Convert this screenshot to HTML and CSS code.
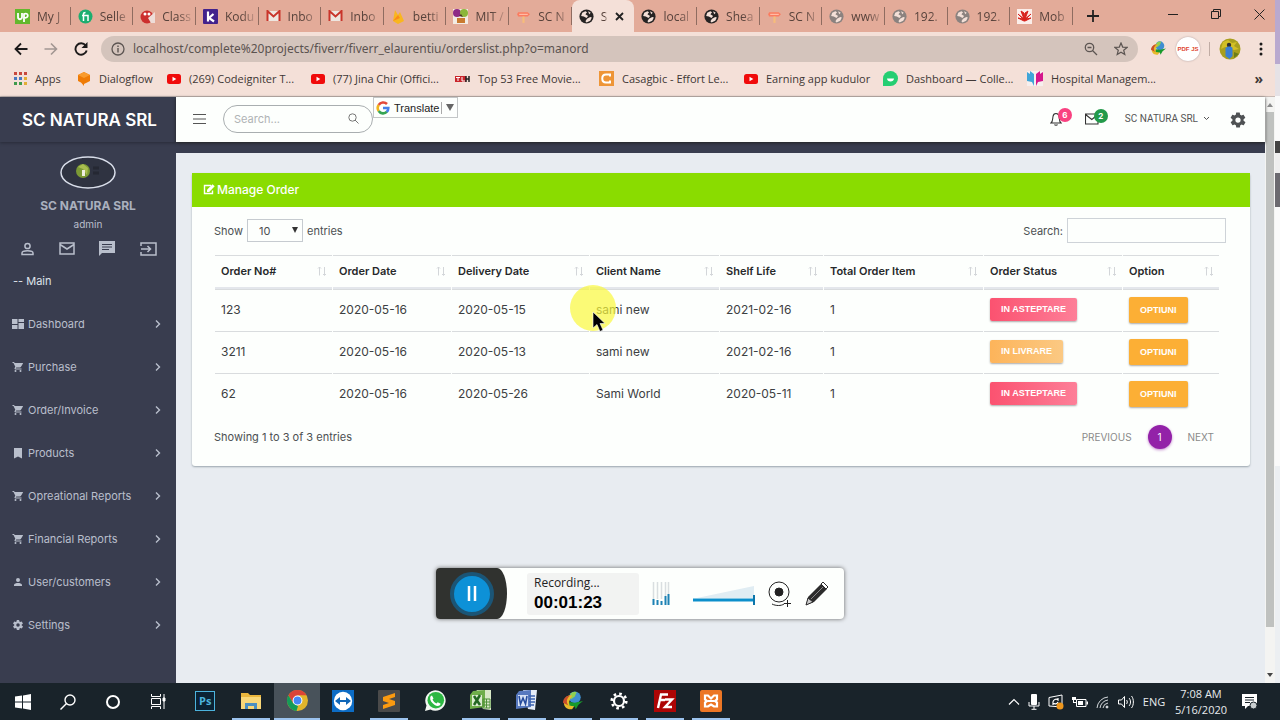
FILE: index.html
```html
<!DOCTYPE html>
<html lang="en">
<head>
  <meta charset="UTF-8" />
  <meta name="viewport" content="width=device-width, initial-scale=1.0"/>
  <title>Manage Order</title>
  <link rel="stylesheet" href="styles.css">
</head>
<body>

  <!-- Shared icons -->
  <svg class="defs" aria-hidden="true">
    <symbol id="i-globe" viewBox="0 0 14 14"><circle cx="7" cy="7" r="6.6" fill="currentColor"/><path d="M3 3.500l3-1.500 1.500 1L6 5l2.500 1.500L7 8.500 4.500 7 2 6.500zM7.500 9l3-1.500 1.500.5-1.500 3L7 12.500 6 11.500z" fill="#f4e0d8"/><path d="M8.500 2l2.500 1.500-1.500 1.300z" fill="#f4e0d8"/></symbol>
    <symbol id="i-gmail" viewBox="0 0 14 12"><path d="M1 1h12v10H1z" fill="#eee6e0"/><path d="M1 11V1l6 5.4L13 1v10" fill="none" stroke="#c9352b" stroke-width="2"/></symbol>
    <symbol id="i-sc" viewBox="0 0 14 14"><path d="M2 3h9l2 2-2 2H2L1 5z" fill="#fb7c60"/><path d="M6 7h2v6H6z" fill="#f7bd79"/><path d="M3 5h8" stroke="#ffc3b0"/></symbol>
    <symbol id="i-yt" viewBox="0 0 14 10"><rect width="14" height="10" rx="2.5" fill="#f00b0b"/><path d="M5.5 2.8v4.4L9.3 5z" fill="#fff"/></symbol>
    <symbol id="i-cart" viewBox="0 0 24 24"><path fill="currentColor" d="M7 18a2 2 0 100 4 2 2 0 000-4zM1 2v2h2l3.6 7.6-1.4 2.4C4.500 15.400 5.500 17 7 17h12v-2H7.400l1.100-2h7.500c.7 0 1.400-.4 1.700-1L21.900 5c.3-.7-.1-1-.9-1H5.200L4.300 2zM17 18a2 2 0 100 4 2 2 0 000-4z"/></symbol>
    <symbol id="i-person" viewBox="0 0 24 24"><path fill="currentColor" d="M12 12a4 4 0 100-8 4 4 0 000 8zm0 2c-3 0-8 1.300-8 4v2h16v-2c0-2.700-5-4-8-4z"/></symbol>
    <symbol id="i-gear" viewBox="0 0 24 24"><path fill="currentColor" d="M19.400 13a7.500 7.500 0 000-2l2.100-1.600c.2-.2.3-.4.1-.7l-2-3.400c-.1-.2-.4-.3-.6-.2l-2.500 1a7 7 0 00-1.700-1L14.400 2.400A.5.500 0 0014 2h-4c-.3 0-.5.200-.5.400l-.4 2.700a7 7 0 00-1.700 1l-2.500-1c-.2-.1-.5 0-.6.200l-2 3.400c-.1.200-.1.500.1.700L4.600 11a7.500 7.500 0 000 2l-2.100 1.600c-.2.200-.3.400-.1.700l2 3.400c.1.200.4.300.6.200l2.500-1c.5.400 1.100.7 1.700 1l.4 2.700c0 .2.200.4.500.4h4c.3 0 .5-.2.500-.4l.4-2.700a7 7 0 001.700-1l2.500 1c.2.100.5 0 .6-.2l2-3.400c.1-.2.100-.5-.1-.7zM12 15.500a3.500 3.500 0 110-7 3.500 3.500 0 010 7z"/></symbol>
    <symbol id="i-next" viewBox="0 0 8 10"><path d="M2 1.500L5.500 5 2 8.500" fill="none" stroke="currentColor" stroke-width="1.400"/></symbol>
    <symbol id="i-sort" viewBox="0 0 10 10"><path d="M2.500 9.500V1M1 2.500L2.500 1 4 2.500M7.500 1v8M6 8l1.500 1.500L9 8" fill="none" stroke="#d3d6d9" stroke-width="1"/></symbol>
    <symbol id="i-idm" viewBox="0 0 24 22"><circle cx="14" cy="7" r="6.500" fill="#3f8fd0"/><path d="M9 3a7 7 0 017-2l-2 5-4 3z" fill="#8ed052"/><path d="M2 13C2 7 7 4 11 5l-3 6c-1 4 3 6 6 5l-3 4C6 21 2 18 2 13z" fill="#e8bb2a"/><path d="M1 13c0-5 4-8 8-8-4 3-5 7-2 11z" fill="#c94e2c"/><path d="M8 12l6 1 9-2-5 4-3 5-1-3-6-1z" fill="#189a2c"/></symbol>
  </svg>

  <div class="work">
    <div class="browser">

      <!-- Tab strip -->
      <div class="tabstrip">
        <div class="tabs">
          <div class="tab"><svg width="15" height="15"><rect width="15" height="15" fill="#63b82c"/><path d="M3 4v4c0 3 4 3 4 0V4m2 9V5c4-2 6 4 0 4" fill="none" stroke="#fff" stroke-width="1.800"/></svg><span>My J</span></div>
          <div class="tab"><svg width="15" height="15"><circle cx="7.500" cy="7.500" r="7" fill="#1dae70"/><path d="M5.500 12V5c0-1.500 1-1.500 2-1.500M4 6.500h6V12" fill="none" stroke="#fff" stroke-width="1.500"/></svg><span>Selle</span></div>
          <div class="tab"><svg width="15" height="15"><circle cx="7" cy="8" r="6.500" fill="#cc2f2d"/><circle cx="5" cy="5" r="1.500" fill="#fff"/><path d="M8 9l7-6v11h-4z" fill="#eeddd8"/><circle cx="9" cy="5" r="1.500" fill="#fff"/></svg><span>Class</span></div>
          <div class="tab"><svg width="15" height="15"><rect width="15" height="15" rx="1" fill="#42228c"/><path d="M5 2.500v10M10.500 5L6 9l5 3.500" fill="none" stroke="#fff" stroke-width="2.200"/></svg><span>Kodu</span></div>
          <div class="tab"><svg width="15" height="12"><use href="#i-gmail"/></svg><span>Inbo</span></div>
          <div class="tab"><svg width="15" height="12"><use href="#i-gmail"/></svg><span>Inbo</span></div>
          <div class="tab"><svg width="15" height="15"><path d="M2 12L4 1l3 5 2-3 4 9-6 3z" fill="#f9b61f"/><path d="M2 12l5-6 2 3z" fill="#f98a1b"/></svg><span>betti</span></div>
          <div class="tab"><svg width="15" height="15"><rect width="15" height="15" fill="#f3ece4"/><circle cx="4" cy="4" r="4" fill="#8e2a86"/><circle cx="11" cy="4" r="4" fill="#8bb63a"/><path d="M4 9h8v5H4z" fill="#c97a30"/><path d="M6 7l2-2 2 3z" fill="#4a3320"/></svg><span>MIT /</span></div>
          <div class="tab"><svg width="15" height="15"><use href="#i-sc"/></svg><span>SC N</span></div>
          <div class="tab active"><svg width="15" height="15"><use href="#i-globe"/></svg><span>S</span><button class="tab-close" aria-label="Close tab"><svg width="9" height="9"><path d="M1 1l7 7M8 1L1 8" stroke="#222" stroke-width="1.800"/></svg></button></div>
          <div class="tab"><svg width="15" height="15"><use href="#i-globe"/></svg><span>local</span></div>
          <div class="tab"><svg width="15" height="15"><use href="#i-globe"/></svg><span>Shea</span></div>
          <div class="tab"><svg width="15" height="15"><use href="#i-sc"/></svg><span>SC N</span></div>
          <div class="tab idle"><svg width="15" height="15"><use href="#i-globe"/></svg><span>www</span></div>
          <div class="tab idle"><svg width="15" height="15"><use href="#i-globe"/></svg><span>192.</span></div>
          <div class="tab idle"><svg width="15" height="15"><use href="#i-globe"/></svg><span>192.</span></div>
          <div class="tab"><svg width="15" height="15"><rect width="15" height="15" fill="#fbeeea"/><path d="M7 12L1 9l5 1-5-5 6 5-3-8 3 2 .5 6L8 4l3-2-3 8 6-5-5 5 5-1-6 3z" fill="#d8221c" stroke="#d8221c"/></svg><span>Mob</span></div>
        </div>
        <button class="new-tab" aria-label="New tab"><svg width="12" height="12"><path d="M6 0v12M0 6h12" stroke="#222" stroke-width="1.800"/></svg></button>
        <div class="win-controls">
          <button aria-label="Minimize"><svg width="10" height="10"><path d="M0 5.500h10" stroke="#222"/></svg></button>
          <button aria-label="Restore"><svg width="10" height="10"><path d="M.5 2.500h7v7h-7zM2.500 2.500v-2h7v7h-2" fill="none" stroke="#222"/></svg></button>
          <button aria-label="Close"><svg width="11" height="11"><path d="M.5.500l10 10M10.500.500l-10 10" stroke="#222"/></svg></button>
        </div>
      </div>

      <!-- Address bar -->
      <div class="toolbar">
        <div class="nav-buttons">
          <button aria-label="Back"><svg width="14" height="14"><path d="M13.500 7H1.500M7 1.500L1.500 7 7 12.500" fill="none" stroke="#1c1a1a" stroke-width="1.800"/></svg></button>
          <button aria-label="Forward"><svg width="14" height="14"><path d="M.5 7h12M7 1.500L12.500 7 7 12.500" fill="none" stroke="#a19692" stroke-width="1.600"/></svg></button>
          <button aria-label="Reload"><svg width="14" height="14"><path d="M11.700 3.500A5.700 5.700 0 1012.700 8.500" fill="none" stroke="#1c1a1a" stroke-width="1.900"/><path d="M13.500 0v6h-6z" fill="#1c1a1a"/></svg></button>
        </div>
        <div class="address">
          <svg width="14" height="14"><circle cx="7" cy="7" r="6" fill="none" stroke="#5c5552" stroke-width="1.300"/><path d="M7 6v4.500M7 3.500V5" stroke="#5c5552" stroke-width="1.400"/></svg>
          <input type="text" aria-label="Address" value="localhost/complete%20projects/fiverr/fiverr_elaurentiu/orderslist.php?o=manord">
          <svg width="14" height="14"><circle cx="5.500" cy="5.500" r="4.200" fill="none" stroke="#5c5552" stroke-width="1.300"/><path d="M8.500 8.500l4.500 4.500M3.500 5.500h4" stroke="#5c5552" stroke-width="1.300"/></svg>
          <svg class="star" width="14" height="14"><path d="M7 1l1.700 4.100 4.400.3-3.400 2.800 1.100 4.300L7 10.200l-3.800 2.300 1.100-4.300L.9 5.400l4.400-.3z" fill="none" stroke="#5c5552" stroke-width="1.200"/></svg>
        </div>
        <div class="extensions">
          <svg width="17" height="15"><use href="#i-idm"/></svg>
          <span class="pdf">PDF JS</span>
          <span class="divider"></span>
          <svg width="22" height="22"><circle cx="11" cy="11" r="10.500" fill="#a99f1d"/><path d="M4 4l5-2 4 3 5-1-3 4 5 3-5 1-9-3-4 2z" fill="#d3bf24"/><circle cx="10" cy="7" r="2.200" fill="#33302c"/><path d="M6.500 10c2-2 6-2 7 0v8l-3 3-4-3z" fill="#3a7fd1"/><path d="M15 14l5 2-5 4z" fill="#6c7c18"/></svg>
          <svg class="kebab" width="4" height="14" fill="#1c1a1a"><circle cx="2" cy="2" r="1.500"/><circle cx="2" cy="7" r="1.500"/><circle cx="2" cy="12" r="1.500"/></svg>
        </div>
      </div>

      <!-- Bookmarks -->
      <div class="bookmarks">
        <a href="#" class="bm-apps"><svg width="13" height="13"><g stroke-width="3" stroke-dasharray="3 2"><path d="M0 1.500h13" stroke="#c8483c"/><path d="M0 6.500h13" stroke="#4878c0"/><path d="M0 11.500h13" stroke="#3f9a4c"/></g><path d="M10 5h3v8h-3z" fill="#e3ad35"/><path d="M10 8h3v2h-3z" fill="#f4e0d8"/></svg>Apps</a>
        <a href="#" class="bm-dialog"><svg width="14" height="14"><path d="M7 0l6 3v6l-6 3v2L4 10.500 1 9V3z" fill="#ef7b06"/><path d="M7 0l6 3-6 3-6-3z" fill="#f99b2d"/></svg>Dialogflow</a>
        <a href="#" class="bm-code"><svg width="14" height="10"><use href="#i-yt"/></svg>(269) Codeigniter T...</a>
        <a href="#" class="bm-jina"><svg width="14" height="10"><use href="#i-yt"/></svg>(77) Jina Chir (Offici...</a>
        <a href="#" class="bm-top"><svg width="15" height="6"><path d="M0 0h11v6H0z" fill="#c9252b"/><path d="M1 1.500h4M3 1.500V5M7 1v4h3" stroke="#fff" fill="none"/><path d="M11 0v6M14 0v6M11 3h3" stroke="#222" stroke-width="1.500"/></svg>Top 53 Free Movie...</a>
        <a href="#" class="bm-casa"><svg width="15" height="15"><rect width="15" height="15" fill="#ee9537"/><path d="M11 5.500V3.500H7c-5 0-5 8 0 8h4v-2" fill="none" stroke="#fff" stroke-width="2"/></svg>Casagbic - Effort Le...</a>
        <a href="#" class="bm-earn"><svg width="14" height="10"><use href="#i-yt"/></svg>Earning app kudulor</a>
        <a href="#" class="bm-dash"><svg width="15" height="15"><path d="M0 15V7.500A7.500 7.500 0 117.500 15z" fill="#25ce72"/><path d="M4 7.500h7c0 4-7 4-7 0z" fill="#fff"/></svg>Dashboard — Colle...</a>
        <a href="#" class="bm-hosp"><svg width="16" height="15"><rect width="16" height="15" fill="#f6efee"/><path d="M0 1l3 2V0l4 3v12L5 11l-5-1z" fill="#3fa5d8"/><path d="M16 1l-3 2V0L9 3v12l2-4 5-1z" fill="#d5168c"/></svg>Hospital Managem...</a>
        <button class="more" aria-label="More bookmarks">»</button>
      </div>

      <!-- Web page -->
      <div class="page">
        <aside class="sidebar">
          <a href="#" class="brand">SC NATURA SRL</a>
          <div class="profile">
            <svg class="avatar" width="56" height="33"><ellipse cx="28" cy="16.500" rx="27" ry="15.500" fill="#2f3341" stroke="#d9deea" stroke-width="1.500"/><circle cx="23" cy="15" r="7" fill="#7c9a35"/><path d="M18 11l5-3 5 4-1 7-4-6z" fill="#a9bd50"/><path d="M22 14h3v6h-3z" fill="#f0efe0"/><path d="M33 12h6M33 17h6" stroke="#252833" stroke-width="3"/></svg>
            <strong>SC NATURA SRL</strong>
            <small>admin</small>
            <div class="shortcuts">
              <a href="#" aria-label="Profile"><svg width="13" height="14"><circle cx="6.500" cy="4" r="2.600" fill="none" stroke="currentColor" stroke-width="1.500"/><path d="M1 12.500v-1.500c0-3 11-3 11 0v1.500z" fill="none" stroke="currentColor" stroke-width="1.500"/></svg></a>
              <a href="#" aria-label="Mail"><svg width="16" height="13"><path d="M1 1h14v11H1zM1 2.500l7 4.500 7-4.500" fill="none" stroke="currentColor" stroke-width="1.500"/></svg></a>
              <a href="#" aria-label="Messages"><svg width="16" height="15"><path d="M0 0h16v12H3l-3 3z" fill="currentColor"/><path d="M3 3.500h10M3 6h10M3 8.500h7" stroke="#393d4f"/></svg></a>
              <a href="#" aria-label="Log out"><svg width="17" height="14"><path d="M1 4V1h15v12H1v-3M1 7h9M7.500 4L10.500 7l-3 3" fill="none" stroke="currentColor" stroke-width="1.500"/></svg></a>
            </div>
          </div>
          <p class="menu-title">-- Main</p>
          <nav class="menu">
            <a href="#"><svg width="12" height="12"><path d="M0 1h5.500v5H0zM6.500 1H12v3H6.500zM6.500 5H12v6H6.500zM0 7h5.500v4H0z" fill="currentColor"/></svg><span>Dashboard</span><svg width="8" height="10"><use href="#i-next"/></svg></a>
            <a href="#"><svg width="12" height="12"><use href="#i-cart"/></svg><span>Purchase</span><svg width="8" height="10"><use href="#i-next"/></svg></a>
            <a href="#"><svg width="12" height="12"><use href="#i-cart"/></svg><span>Order/Invoice</span><svg width="8" height="10"><use href="#i-next"/></svg></a>
            <a href="#"><svg width="12" height="12"><path d="M2 1h8v10.500L6 9.500l-4 2z" fill="currentColor"/></svg><span>Products</span><svg width="8" height="10"><use href="#i-next"/></svg></a>
            <a href="#"><svg width="12" height="12"><use href="#i-cart"/></svg><span>Opreational Reports</span><svg width="8" height="10"><use href="#i-next"/></svg></a>
            <a href="#"><svg width="12" height="12"><use href="#i-cart"/></svg><span>Financial Reports</span><svg width="8" height="10"><use href="#i-next"/></svg></a>
            <a href="#"><svg width="12" height="12"><use href="#i-person"/></svg><span>User/customers</span><svg width="8" height="10"><use href="#i-next"/></svg></a>
            <a href="#"><svg width="12" height="12"><use href="#i-gear"/></svg><span>Settings</span><svg width="8" height="10"><use href="#i-next"/></svg></a>
          </nav>
        </aside>

        <div class="content">
          <header class="topbar">
            <button class="burger" aria-label="Toggle menu"><svg width="13" height="12"><path d="M0 1.500h13M0 6h13M0 10.500h13" stroke="#555"/></svg></button>
            <label class="site-search">
              <input type="text" placeholder="Search..." aria-label="Search site">
              <svg width="11" height="11"><circle cx="4.500" cy="4.500" r="3.700" fill="none" stroke="#777"/><path d="M7 7l3.500 3.500" stroke="#777"/></svg>
            </label>
            <button class="translate">
              <svg width="14" height="14" fill="none" stroke-width="2.600"><path d="M2.700 4A5.300 5.300 0 0111 3" stroke="#e24a3b"/><path d="M2.700 10a5.300 5.300 0 010-6" stroke="#f2b51d"/><path d="M11 10.700A5.300 5.300 0 012.700 10" stroke="#36a553"/><path d="M7 7h5.300c0 1.600-.5 2.800-1.500 3.900" stroke="#4580ea"/></svg>
              <span>Translate</span><svg width="8" height="7"><path d="M0 0h8L4 7z" fill="#666"/></svg>
            </button>
            <div class="top-actions">
              <a href="#" class="notify" aria-label="Notifications"><svg width="12" height="14"><path d="M1 11c2-1.500 1.500-4 2-6.500C3.500.5 8.500.5 9 4.500c.5 2.500 0 5 2 6.500zM4.500 12.500c.5 1 2.500 1 3 0" fill="none" stroke="#333" stroke-width="1.100"/></svg><b>6</b></a>
              <a href="#" class="notify mail" aria-label="Mail"><svg width="14" height="12"><path d="M.5 1h12.500v10H.5zM.5 1.500l6.300 5 6.200-5" fill="none" stroke="#333" stroke-width="1.100"/></svg><b>2</b></a>
              <a href="#" class="account">SC NATURA SRL <svg width="7" height="5"><path d="M1 1l2.500 2.500L6 1" fill="none" stroke="#555"/></svg></a>
              <a href="#" class="cog" aria-label="Settings"><svg width="18" height="18"><use href="#i-gear"/></svg></a>
            </div>
          </header>

          <main>
            <section class="card">
              <h2><svg width="12" height="11"><path d="M8 1.500H1.500v8h8V6.500" fill="none" stroke="#fff" stroke-width="1.400"/><path d="M4 8V5.800L9.500.2l2.200 2L6.200 8z" fill="#fff"/></svg>Manage Order</h2>
              <div class="card-body">
                <div class="controls">
                  <label class="length">Show
                    <span class="select"><select><option>10</option><option>25</option><option>50</option></select><svg width="6" height="6"><path d="M0 0h6L3 6z" fill="#333"/></svg></span>
                    entries</label>
                  <label class="filter">Search: <input type="search"></label>
                </div>

                <table>
                  <colgroup><col class="c-no"><col class="c-date"><col class="c-delivery"><col class="c-client"><col class="c-shelf"><col class="c-total"><col class="c-status"><col class="c-option"></colgroup>
                  <thead>
                    <tr>
                      <th><div>Order No#<svg width="10" height="10"><use href="#i-sort"/></svg></div></th>
                      <th><div>Order Date<svg width="10" height="10"><use href="#i-sort"/></svg></div></th>
                      <th><div>Delivery Date<svg width="10" height="10"><use href="#i-sort"/></svg></div></th>
                      <th><div>Client Name<svg width="10" height="10"><use href="#i-sort"/></svg></div></th>
                      <th><div>Shelf Life<svg width="10" height="10"><use href="#i-sort"/></svg></div></th>
                      <th><div>Total Order Item<svg width="10" height="10"><use href="#i-sort"/></svg></div></th>
                      <th><div>Order Status<svg width="10" height="10"><use href="#i-sort"/></svg></div></th>
                      <th><div>Option<svg width="10" height="10"><use href="#i-sort"/></svg></div></th>
                    </tr>
                  </thead>
                  <tbody>
                    <tr>
                      <td>123</td><td>2020-05-16</td><td>2020-05-15</td><td>sami new</td><td>2021-02-16</td><td>1</td>
                      <td><span class="badge pink">IN ASTEPTARE</span></td><td><button class="option">OPTIUNI</button></td>
                    </tr>
                    <tr>
                      <td>3211</td><td>2020-05-16</td><td>2020-05-13</td><td>sami new</td><td>2021-02-16</td><td>1</td>
                      <td><span class="badge amber">IN LIVRARE</span></td><td><button class="option">OPTIUNI</button></td>
                    </tr>
                    <tr>
                      <td>62</td><td>2020-05-16</td><td>2020-05-26</td><td>Sami World</td><td>2020-05-11</td><td>1</td>
                      <td><span class="badge pink">IN ASTEPTARE</span></td><td><button class="option">OPTIUNI</button></td>
                    </tr>
                  </tbody>
                </table>

                <div class="table-foot">
                  <span>Showing 1 to 3 of 3 entries</span>
                  <div class="pager">
                    <a href="#">PREVIOUS</a><a href="#" class="current">1</a><a href="#">NEXT</a>
                  </div>
                </div>
              </div>
            </section>
          </main>
        </div>

        <div class="scrollbar">
          <svg width="6" height="4"><path d="M0 4l3-4 3 4z" fill="#8b8b8b"/></svg>
          <div class="thumb"></div>
          <svg width="6" height="4"><path d="M0 0l3 4 3-4z" fill="#444"/></svg>
        </div>
      </div>
    </div>
    <div class="behind"></div>
  </div>

  <!-- Taskbar -->
  <footer class="taskbar">
    <div class="system">
      <button aria-label="Start"><svg width="16" height="16" fill="#fff"><path d="M0 2.500l7-1v6H0zM8 1.400L16 0v7.500H8zM0 8.500h7v6l-7-1zM8 8.500h8V16l-8-1.400z"/></svg></button>
      <button aria-label="Search"><svg width="16" height="16" fill="none" stroke="#fff" stroke-width="1.400"><circle cx="10" cy="6" r="5"/><path d="M6.500 9.500L.5 15.500"/></svg></button>
      <button aria-label="Cortana"><svg width="16" height="16"><circle cx="8" cy="8" r="6" fill="none" stroke="#fff" stroke-width="2"/></svg></button>
      <button aria-label="Task view"><svg width="16" height="16" fill="none" stroke="#fff"><path d="M1.500 0v2.500h9V0M1.500 4.500h9v6h-9zM1.500 15v-2.500h9V15M14 0v15"/><path d="M13 4h2v3h-2z" fill="#fff"/></svg></button>
    </div>
    <div class="apps">
      <button aria-label="Photoshop"><svg width="20" height="20"><rect x=".5" y=".5" width="19" height="19" fill="#0b2234" stroke="#4cb3dd"/><text x="4" y="14">Ps</text></svg></button>
      <button class="open" aria-label="Explorer"><svg width="20" height="18"><path d="M0 1h7l2 2h11v14H0z" fill="#e9b63d"/><path d="M0 5h20v12H0z" fill="#f8d778"/><path d="M4 17v-6h12v6h-3v-3H7v3z" fill="#4b8fc0"/></svg></button>
      <button class="open active" aria-label="Chrome"><svg width="21" height="21"><circle cx="10.500" cy="10.500" r="10.500" fill="#e0b52b"/><path d="M1.400 5.300A10.500 10.500 0 0119.600 5.300h-9L6 13z" fill="#db4437"/><path d="M1.400 5.300L6 13l5 3-1.500 5A10.500 10.500 0 011.400 5.300z" fill="#159b58"/><circle cx="10.500" cy="10.500" r="4.900" fill="#fff"/><circle cx="10.500" cy="10.500" r="3.900" fill="#4687f4"/></svg></button>
      <button aria-label="TeamViewer"><svg width="22" height="22"><rect width="22" height="22" fill="#0c6cc5"/><circle cx="11" cy="11" r="9.200" fill="#fff"/><path d="M3 11l5-4v3h6V7l5 4-5 4v-3H8v3z" fill="#1067b8"/></svg></button>
      <button class="open" aria-label="Sublime Text"><svg width="22" height="22"><rect width="22" height="22" rx="1" fill="#4a4a4a"/><path d="M5 7l12-4v4l-6 2 6 2v4L5 19v-4l6-2-6-2z" fill="#fb9a10"/></svg></button>
      <button aria-label="WhatsApp"><svg width="21" height="21"><path d="M0 21l1.500-5.500A10.200 10.200 0 115.500 19.500z" fill="#f3f8f3"/><circle cx="10.800" cy="10.200" r="8.300" fill="#2cb742"/><path d="M7 5.500l1.500 3-1 1c1 2 2 3 4 4l1.200-1.200 3 1.500c-1 3-4 2.500-6 1.200-3-2-5-5-4.500-7.500 0-1 1-2 1.800-2z" fill="#fff"/></svg></button>
      <button class="open" aria-label="Excel"><svg width="22" height="21"><path d="M5 3l2-3h14v20l-8-1z" fill="#d8e8c6"/><path d="M0 5l3-4 12-1v17L0 19z" fill="#6fae4a"/><path d="M2 5h10v11H2z" fill="#dcecd0"/><path d="M4 6l6 9M10 5L4 15" stroke="#236722" stroke-width="2.500"/><path d="M13 9h7v9h-7zM13 12h7M13 15h7M16.500 9v9" fill="none" stroke="#4f9138"/></svg></button>
      <button class="open" aria-label="Word"><svg width="22" height="21"><path d="M7 0h14l-2 20-7-1z" fill="#e6edf8"/><path d="M0 5l3-4 12-1v17L0 19z" fill="#5779bf"/><path d="M2 5h10v11H2z" fill="#d7e2f5"/><path d="M3 6l1.500 8L7 8l2.500 6L11 6" fill="none" stroke="#264c9d" stroke-width="1.600"/><path d="M13 6h6M13 9h6M13 12h6M13 15h5" stroke="#3c63af" stroke-width="1.400"/></svg></button>
      <button class="open" aria-label="IDM"><svg width="24" height="20"><use href="#i-idm"/></svg></button>
      <button class="open" aria-label="Settings"><svg width="18" height="18" fill="none" stroke="#fff"><circle cx="9" cy="9" r="5" stroke-width="2.200"/><circle cx="9" cy="9" r="7.300" stroke-width="2.600" stroke-dasharray="2.600 3.130"/></svg></button>
      <button class="open" aria-label="FileZilla"><svg width="22" height="22"><rect width="22" height="22" fill="#ad0505"/><path d="M4 18L7 4.500h7M5.500 10h5.500M11 9.500h7L11 17h7" fill="none" stroke="#fff" stroke-width="2.400"/></svg></button>
      <button class="open" aria-label="XAMPP"><svg width="22" height="22"><rect width="22" height="22" rx="2" fill="#ec7625"/><path d="M5 5.500h3l3 3 3-3h3v4l-2 1.500 2 1.500v4h-3l-3-2-3 2H5v-4L7 11 5 9.500zM8 11h6" fill="none" stroke="#fff" stroke-width="2.200"/></svg></button>
    </div>
    <div class="tray">
      <svg width="12" height="8"><path d="M1 6.500l5-5 5 5" fill="none" stroke="#fff" stroke-width="1.200"/></svg>
      <svg width="12" height="16"><rect x="3" width="6" height="11" rx="1" fill="#fff"/><path d="M1 8v4h10V8M6 12v3M3.500 15.300h5" fill="none" stroke="#fff"/></svg>
      <svg width="16" height="16"><path d="M1 3.500L14 1v12L1 12z" fill="none" stroke="#fff"/><path d="M5 8a3 3 0 015-2V4M10 8a3 3 0 01-5 1v2" fill="none" stroke="#fff" stroke-width="1.200"/><circle cx="12" cy="12" r="3.500" fill="#ee971d"/></svg>
      <svg width="16" height="12"><path d="M4.500 3.500H14v7H4.500z" fill="none" stroke="#fff"/><path d="M6 5h5v4H6zM14.500 5.500H16v3h-1.500zM0 1h4v3H0zM2 3v3h3v1H1V3z" fill="#fff"/></svg>
      <svg width="14" height="14" fill="none" stroke="#d5dadd"><path d="M1 13A12 12 0 0112 2M4 13a9 9 0 018-8M7 13a6 6 0 015-5"/><circle cx="11" cy="12" r="1" fill="#fff"/></svg>
      <svg width="16" height="14" fill="none" stroke="#fff"><path d="M.5 5h3l3-3.500v11l-3-3.500h-3zM8.500 5c1 1 1 3 0 4M11 3c2 2 2 6 0 8M13.500 1c2.500 3 2.500 9 0 12"/></svg>
      <span class="lang">ENG</span>
      <time class="clock"><span>7:08 AM</span><span>5/16/2020</span></time>
      <svg class="action-center" width="16" height="16"><path d="M0 0h15v12H6l-3 3v-3H0z" fill="#fff"/><path d="M3 3.500h9M3 6h9M3 8.500h5" stroke="#19232a"/><circle cx="11.500" cy="11.500" r="3.500" fill="#c9ced0" stroke="#19232a"/></svg>
    </div>
  </footer>

  <!-- Screen recorder -->
  <div class="recorder">
    <div class="rec-cap"><button aria-label="Pause recording"><svg width="10" height="15"><path d="M2 0v15M8 0v15" stroke="#fff" stroke-width="2.500"/></svg></button></div>
    <div class="rec-status"><span>Recording...</span><strong>00:01:23</strong></div>
    <svg width="18" height="24"><path d="M1.500 0v17M5.500 0v17M9.500 0v17M13.500 0v14M16.500 0v12" stroke="#d9dee0" stroke-width="1.500"/><path d="M1.500 17v6M5.500 18v5M9.500 19v4M13.500 14v9M16.500 12v11" stroke="#1d82b4" stroke-width="2"/></svg>
    <svg class="rec-volume" width="62" height="24"><path d="M4 16L61 4v12z" fill="#e0edf3"/><path d="M0 18h61" stroke="#0c8fcb" stroke-width="3"/><path d="M61 13v10" stroke="#0c76aa" stroke-width="2"/></svg>
    <svg width="24" height="26" fill="none" stroke="#222"><circle cx="11" cy="11" r="10"/><circle cx="11" cy="11" r="4" fill="#222"/><path d="M4 23c4 2 9 2 12 0M16 22.500h7M19.500 19v7"/></svg>
    <svg width="24" height="24"><path d="M1 23l2-8L16 2l6 5L9 20z" fill="#2c2c2c"/><path d="M16 2l2-2 5 5-2 2z" fill="#fff" stroke="#2c2c2c"/><path d="M1 23l2-7 5 4z" fill="#ccc" stroke="#2c2c2c"/><path d="M6 17L18 5" stroke="#888"/></svg>
  </div>

  <!-- Mouse pointer -->
  <div class="pointer">
    <svg width="14" height="22"><path d="M1 1v16l4-3.500 3 7 3-1.500-3-6.500h5z" fill="#000" stroke="#fff" stroke-width=".6"/></svg>
  </div>

</body>
</html>
```
FILE: styles.css
```css
/* -- Reset & Base -- */
* { box-sizing: border-box; margin: 0; padding: 0; }
body {
  font-family: 'Open Sans', sans-serif;
  font-size: 12px;
  color: #333;
  height: 100vh;
  display: flex;
  flex-direction: column;
  overflow: hidden;
  position: relative;
}
a { color: inherit; text-decoration: none; }
button { background: none; border: none; font: inherit; color: inherit; cursor: pointer; }
input, select { font: inherit; color: inherit; }
svg { display: block; flex-shrink: 0; }
.defs { position: absolute; width: 0; height: 0; }

.work { flex: 1; display: flex; min-height: 0; }
.browser { flex: 1; min-width: 0; display: flex; flex-direction: column; }

/* window peeking out behind the browser */
.behind {
  width: 5px;
  background: linear-gradient(#b9a9cf 0 64px, #e6e2e6 64px 96px, #fafafa 96px 141px, #444 141px 153px, #eee 153px 173px, #6c6a70 173px 207px, #fafafa 207px 466px, #eceff2 466px);
}

/* -- Tab strip -- */
.tabstrip {
  height: 32px;
  background: #e3ab99;
  display: flex;
  padding-left: 8px;
}
.tabs { flex: 1; display: flex; min-width: 0; }
.tab {
  flex: 1;
  min-width: 0;
  display: flex;
  align-items: center;
  gap: 7px;
  padding: 0 1px 0 7px;
  position: relative;
  color: #57423b;
}
.tab::after {
  content: "";
  position: absolute;
  right: 0;
  top: 7px;
  width: 1px;
  height: 18px;
  background: #8f6c60;
}
.tab > svg { color: #262323; }
.tab.idle > svg { color: #8b827f; }
.tab span {
  flex: 1;
  white-space: nowrap;
  -webkit-mask-image: linear-gradient(90deg, #000 50%, transparent);
}
.tab.active {
  background: #f4e0d8;
  border-radius: 8px 8px 0 0;
}
.tab.active::after { display: none; }
.tab-close { margin-right: 9px; }
.new-tab { width: 40px; display: flex; align-items: center; justify-content: center; }
.win-controls { display: flex; align-items: center; gap: 33px; padding: 0 10px 4px 55px; }

/* -- Address bar -- */
.toolbar {
  height: 33px;
  background: #f4e0d8;
  display: flex;
  align-items: center;
  padding: 0 12px 0 14px;
}
.nav-buttons { display: flex; gap: 16px; width: 87px; }
.address {
  flex: 1;
  height: 26px;
  border-radius: 13px;
  background: #d4c4bc;
  display: flex;
  align-items: center;
  padding: 0 10px;
}
.address input {
  flex: 1;
  min-width: 0;
  border: none;
  outline: none;
  background: none;
  padding-left: 8px;
  color: #5b5350;
  font-family: 'Noto Sans', sans-serif;
}
.star { margin-left: 16px; }
.extensions { display: flex; align-items: center; padding-left: 12px; }
.pdf {
  width: 24px;
  height: 24px;
  margin-left: 9px;
  border-radius: 50%;
  background: #fff;
  box-shadow: 0 0 2px #a99;
  color: #e0452e;
  font: bold 6px/24px 'Liberation Sans', sans-serif;
  text-align: center;
}
.divider { width: 1px; height: 14px; background: #c0aca4; margin: 0 9px; }
.kebab { margin-left: 18px; }

/* -- Bookmarks -- */
.bookmarks {
  height: 32px;
  background: #f4e0d8;
  border-bottom: 1px solid #c9bbb5;
  display: flex;
  align-items: center;
  padding: 0 12px 4px 14px;
  font-size: 11px;
  color: #403735;
  white-space: nowrap;
}
.bookmarks a { display: flex; align-items: center; gap: 8px; flex-shrink: 0; }
.bm-apps { width: 63px; }
.bm-dialog { width: 90px; }
.bm-code { width: 144px; }
.bm-jina { width: 144px; }
.bm-top { width: 144px; }
.bm-casa { width: 145px; }
.bm-earn { width: 139px; }
.bm-dash { width: 144px; }
.more { margin-left: auto; font-size: 14px; font-weight: bold; line-height: 16px; }

/* -- Web page -- */
.page {
  flex: 1;
  min-height: 0;
  display: flex;
  background: #e8ecf1;
  font-family: Inter, sans-serif;
  font-size: 11px;
}

/* -- Sidebar -- */
.sidebar { width: 176px; background: #393d4f; color: #b9bfcc; }
.brand {
  display: block;
  height: 45px;
  padding-left: 22px;
  color: #fff;
  font-size: 17px;
  font-weight: 600;
  line-height: 46px;
  white-space: nowrap;
  box-shadow: 0 1px 3px #282b38;
}
.profile { display: flex; flex-direction: column; align-items: center; padding-top: 14px; }
.profile strong { font-size: 12px; line-height: 20px; margin-top: 7px; color: #aab0be; }
.profile small { font-size: 10px; line-height: 16px; }
.shortcuts {
  width: 100%;
  display: flex;
  align-items: center;
  justify-content: space-between;
  padding: 0 19px 0 21px;
  margin-top: 9px;
}
.menu-title { padding-left: 13px; margin-top: 17px; line-height: 16px; color: #dfe3ea; }
.menu { margin-top: 13px; }
.menu a { display: flex; align-items: center; height: 43px; padding: 0 14px 0 12px; }
.menu span { flex: 1; padding-left: 4px; }

/* -- Topbar -- */
.content { flex: 1; min-width: 0; }
.topbar {
  height: 45px;
  background: #fdfffd;
  display: flex;
  align-items: center;
  padding: 0 18px 2px 17px;
  position: relative;
  box-shadow: 0 1px 3px #222;
}
.burger { margin-right: 17px; }
.site-search {
  width: 150px;
  height: 28px;
  border: 1px solid #a9aeb0;
  border-radius: 14px;
  display: flex;
  align-items: center;
  padding: 0 13px 0 10px;
}
.site-search input { flex: 1; min-width: 0; border: none; outline: none; background: none; }
.site-search input::placeholder { color: #b0b3b5; }
.translate {
  align-self: flex-start;
  height: 21px;
  border: 1px solid #c3c6c7;
  display: flex;
  align-items: center;
  padding: 0 3px 0 2px;
  font-family: 'Liberation Sans', sans-serif;
  color: #222;
}
.translate span { padding: 0 2px 0 4px; margin-right: 4px; border-right: 1px solid #aaa; }
.top-actions { margin-left: auto; display: flex; align-items: center; }
.notify { position: relative; width: 35px; }
.notify b {
  position: absolute;
  left: 8px;
  top: -4px;
  width: 14px;
  height: 14px;
  border-radius: 7px;
  background: #f94180;
  color: #fff;
  font-size: 8px;
  line-height: 14px;
  text-align: center;
}
.notify.mail b { background: #239a4a; left: 9px; }
.mail { width: 40px; }
.account { display: flex; align-items: center; gap: 5px; font-family: Roboto, sans-serif; font-size: 10px; color: #555; }
.cog { color: #4f5254; margin-left: 19px; padding-top: 3px; }

/* -- Manage order card -- */
main { border-top: 11px solid #393d4f; padding: 20px 15px 0 16px; }
.card {
  background: #fdfffd;
  border-radius: 3px;
  box-shadow: 0 1px 2px #9aa5ad;
}
.card h2 {
  height: 34px;
  background: #8adc00;
  color: #fff;
  font-size: 12px;
  font-weight: 500;
  display: flex;
  align-items: center;
  gap: 2px;
  padding: 0 11px 2px;
}
.card-body { padding: 11px 24px 17px 22px; }
.controls { display: flex; justify-content: space-between; height: 37px; color: #4c5052; }
.controls label { display: flex; align-items: center; height: 25px; gap: 4px; }
.select { position: relative; }
.select select {
  display: block;
  width: 56px;
  height: 23px;
  appearance: none;
  border: 1px solid #c6cbd0;
  background: none;
  padding-left: 11px;
}
.select svg { position: absolute; right: 5px; top: 8px; }
.filter input { width: 159px; height: 25px; border: 1px solid #ced3d8; background: none; padding: 0 6px; }

table {
  width: calc(100% - 6px);
  table-layout: fixed;
  border-collapse: separate;
  border-spacing: 1px 0;
}
.c-no { width: 117px; }
.c-date { width: 118px; }
.c-delivery { width: 137px; }
.c-client { width: 129px; }
.c-shelf { width: 103px; }
.c-total { width: 159px; }
.c-status { width: 138px; }
.c-option { width: 96px; }
th {
  height: 34px;
  padding: 0 5px 2px 6px;
  border-top: 1px solid #d9dcde;
  border-bottom: 2px solid #e4e7ec;
  text-align: left;
  font-weight: 600;
  color: #26282a;
  white-space: nowrap;
}
th div { display: flex; align-items: center; justify-content: space-between; }
td {
  height: 42px;
  padding: 0 6px 3px;
  border-top: 1px solid #d9dcde;
  color: #3c4042;
  font-size: 12px;
}
.badge, .option {
  display: inline-block;
  border-radius: 2px;
  padding: 0 11px;
  color: #fff;
  font-family: 'Liberation Sans', sans-serif;
  font-weight: bold;
  font-size: 9px;
  box-shadow: 0 1px 2px #aaa;
  vertical-align: middle;
}
.badge { line-height: 23px; }
.pink { background: linear-gradient(90deg, #fb5270, #fd7f98); }
.amber { background: linear-gradient(90deg, #fdb45a, #fbc983); }
.option { line-height: 26px; background: #fcaf35; margin-top: 2px; }

.table-foot { display: flex; align-items: center; justify-content: space-between; color: #4c5052; padding-top: 10px; }
.pager { display: flex; align-items: center; gap: 16px; padding-right: 12px; color: #8a8a8a; font-size: 10px; }
.current {
  width: 24px;
  height: 24px;
  border-radius: 50%;
  background: #9322a8;
  color: #fff;
  line-height: 24px;
  text-align: center;
  box-shadow: 0 1px 3px #c58acf;
}

/* -- Page scrollbar -- */
.scrollbar {
  width: 10px;
  background: #f4f4f2;
  display: flex;
  flex-direction: column;
  align-items: center;
  gap: 5px;
  padding: 6px 0;
}
.thumb { width: 8px; height: 515px; background: #bfc1bf; margin-bottom: auto; }

/* -- Taskbar -- */
.taskbar {
  height: 37px;
  background: #19232a;
  color: #e7eaec;
  display: flex;
  font-size: 11px;
}
.system, .apps, .tray { display: flex; }
.taskbar button { display: flex; align-items: center; justify-content: center; }
.system { margin-right: 2px; }
.system button { width: 45px; }
.apps button { width: 46px; border-bottom: 2px solid transparent; }
.apps text { fill: #4cb3dd; font: bold 11px 'Open Sans', sans-serif; }
.apps .open {
  background: linear-gradient(#9cc3ee, #9cc3ee) center bottom / 38px 2px no-repeat;
  background-origin: border-box;
}
.apps .active { background: #48525a; border-color: #9cc3ee; }
.tray { margin-left: auto; align-items: center; gap: 8px; padding-right: 22px; }
.lang { width: 24px; text-align: center; }
.clock { width: 54px; text-align: center; line-height: 16px; }
.clock span { display: block; }
.action-center { margin-left: 6px; }

/* -- Screen recorder -- */
.recorder {
  position: absolute;
  left: 50%;
  bottom: 101px;
  width: 408px;
  height: 51px;
  margin-left: -204px;
  background: #fdfffd;
  border-radius: 4px;
  box-shadow: 0 0 4px #666;
  display: flex;
  align-items: center;
  gap: 13px;
}
.rec-cap {
  width: 71px;
  height: 51px;
  background: #30322f;
  border-radius: 4px 10px 10px 4px / 4px 26px 26px 4px;
  display: flex;
  align-items: center;
  justify-content: center;
}
.rec-cap button {
  width: 44px;
  height: 44px;
  border-radius: 50%;
  border: 4px solid #1b5576;
  background: #0d91d7;
  display: flex;
  align-items: center;
  justify-content: center;
}
.rec-status {
  width: 112px;
  height: 42px;
  background: #f2f3f2;
  border-radius: 3px;
  padding: 1px 7px;
  margin-left: 7px;
  color: #222;
}
.rec-status span, .rec-status strong { display: block; }
.rec-status span { line-height: 17px; }
.rec-status strong { font: bold 17px/24px 'Liberation Sans', sans-serif; color: #000; }
.rec-volume { margin-left: 10px; }

/* -- Mouse pointer -- */
.pointer {
  position: absolute;
  left: 570px;
  top: 285px;
  width: 46px;
  height: 46px;
  border-radius: 50%;
  background: rgba(250, 248, 60, 0.7);
  padding: 26px 0 0 22px;
}
```
